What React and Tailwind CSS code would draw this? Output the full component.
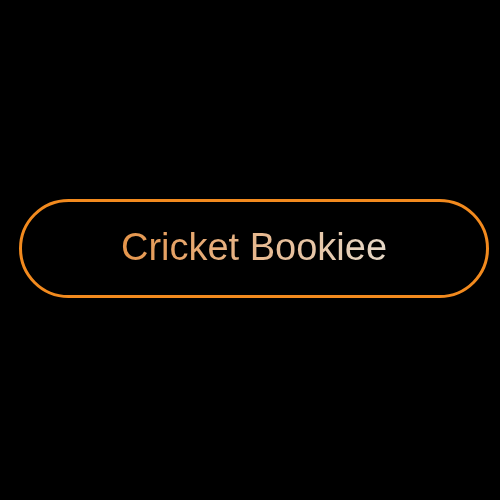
export default function App() {
    return (
        <div className="w-[500px] h-[500px] bg-black pt-[199px]">
            {/* Pill button */}
            <button className="ml-[19px] w-[470px] h-[99px] rounded-full border-[3px] border-[#f28a1e] bg-black flex items-center justify-center pb-[4px]">
                <span
                    className="text-[38px] leading-none bg-gradient-to-r from-[#e5954a] to-[#e6d8c8] bg-clip-text text-transparent"
                    style={{ fontFamily: '"Liberation Sans", Arial, sans-serif' }}
                >
                    Cricket Bookiee
                </span>
            </button>
        </div>
    );
}
